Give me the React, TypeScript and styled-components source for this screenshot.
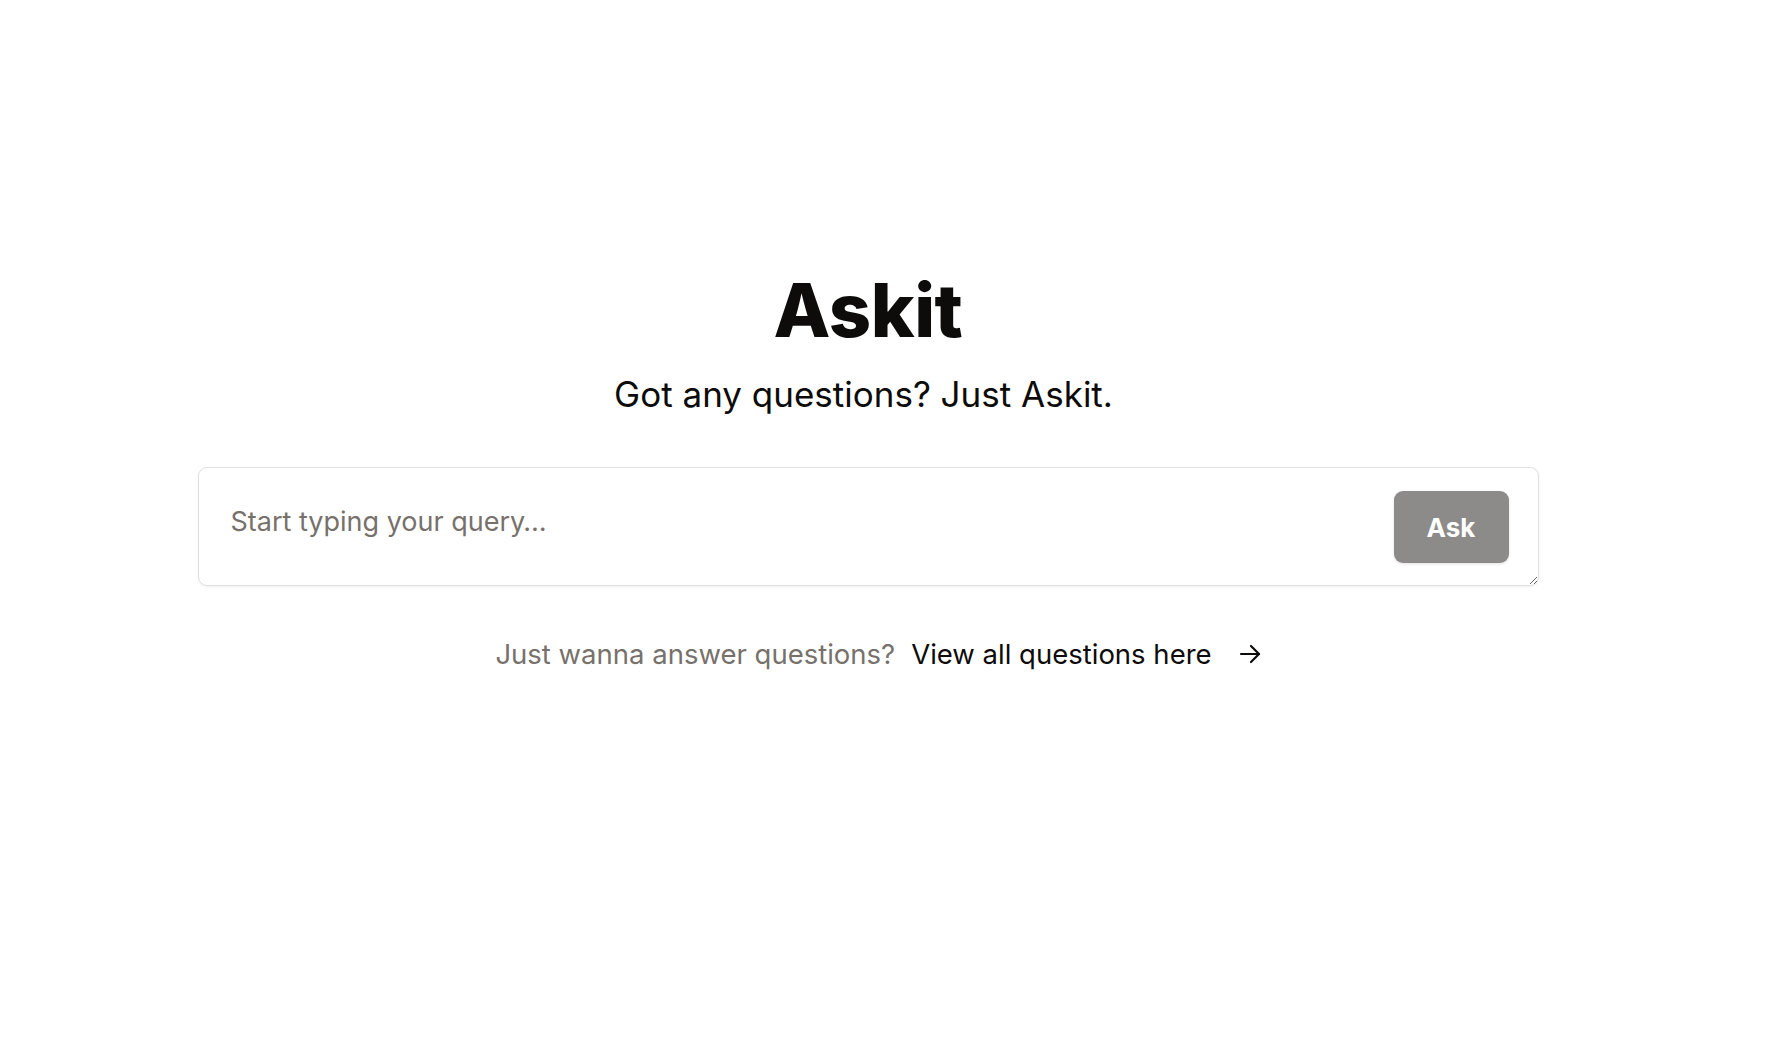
import React from "react";
import styled, { createGlobalStyle } from "styled-components";

const Global = createGlobalStyle`
  html, body { margin: 0; padding: 0; background: #ffffff; }
  body { font-family: Inter, "Noto Sans", sans-serif; color: #0d0c0a; }
  * { box-sizing: border-box; }
`;

const Page = styled.main`
  width: 1736px;
  min-height: 1064px;
  display: flex;
  flex-direction: column;
  align-items: center;
  padding-top: 265px;
`;

const Title = styled.h1`
  margin: 0;
  font-size: 74px;
  line-height: 90px;
  font-weight: 800;
  letter-spacing: -0.5px;
  color: #0d0c0a;
`;

const Subtitle = styled.p`
  margin: 18px 9px 0 0;
  font-size: 35px;
  line-height: 42px;
  font-weight: 400;
  color: #0d0c0a;
`;

const SearchBox = styled.form`
  position: relative;
  width: 1341px;
  margin-top: 52px;
  display: flex;
`;

const Query = styled.textarea`
  width: 100%;
  height: 119px;
  padding: 36px 160px 20px 32px;
  border: 1px solid #e2e0de;
  border-radius: 9px;
  box-shadow: 0 1px 3px rgba(0, 0, 0, 0.06);
  font-family: Inter, "Noto Sans", sans-serif;
  font-size: 27px;
  line-height: 36px;
  color: #0d0c0a;
  resize: vertical;
  outline: none;
  &::placeholder { color: #77716c; }
`;

const AskButton = styled.button`
  position: absolute;
  top: 24px;
  right: 30px;
  width: 115px;
  height: 72px;
  border: none;
  border-radius: 9px;
  background: #8c8b89;
  color: #ffffff;
  font-family: Inter, "Noto Sans", sans-serif;
  font-size: 26px;
  font-weight: 700;
  box-shadow: 0 1px 3px rgba(0, 0, 0, 0.12);
  cursor: pointer;
`;

const Footer = styled.div`
  margin-top: 51px;
  margin-left: 20px;
  display: flex;
  align-items: center;
  gap: 16px;
  font-size: 27.5px;
  line-height: 34px;
`;

const Muted = styled.span`
  color: #77716c;
`;

const Link = styled.a`
  display: flex;
  align-items: center;
  gap: 27px;
  color: #0d0c0a;
  text-decoration: none;
`;

const Arrow = () => (
  <svg width="22" height="20" viewBox="0 0 22 20" fill="none" stroke="#0d0c0a" strokeWidth="2.2" strokeLinecap="round" strokeLinejoin="round">
    <path d="M2 10h18" />
    <path d="M12 2l8 8-8 8" />
  </svg>
);

export default function App() {
  return (
    <>
      <Global />
      <Page>
        <Title>Askit</Title>
        <Subtitle>Got any questions? Just Askit.</Subtitle>
        <SearchBox onSubmit={(e) => e.preventDefault()}>
          <Query placeholder="Start typing your query…" />
          <AskButton type="submit">Ask</AskButton>
        </SearchBox>
        <Footer>
          <Muted>Just wanna answer questions?</Muted>
          <Link href="#">
            View all questions here
            <Arrow />
          </Link>
        </Footer>
      </Page>
    </>
  );
}
